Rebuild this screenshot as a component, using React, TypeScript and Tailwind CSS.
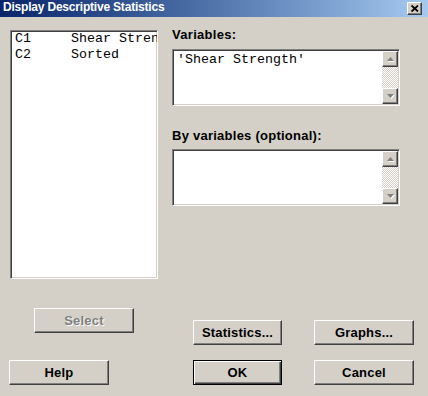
const ui = "font-['Liberation_Sans',Arial,sans-serif]";
const mono = "font-['Liberation_Mono','Courier_New',monospace]";

const raised =
  "border border-t-white border-l-white border-r-[#404040] border-b-[#404040] shadow-[inset_-1px_-1px_0_#808080]";
const sunken =
  "border border-t-[#808080] border-l-[#808080] border-r-white border-b-white shadow-[inset_1px_1px_0_#404040,inset_-1px_-1px_0_#d4d0c8]";

const Arrow = ({ down }: { down?: boolean }) => (
    <svg width="9" height="6" viewBox="0 0 9 6">
        <polygon points={down ? "1,1 8,1 4.5,5" : "1,5 8,5 4.5,1"} fill="#fff" transform="translate(1,1)" />
        <polygon points={down ? "1,1 8,1 4.5,5" : "1,5 8,5 4.5,1"} fill="#808080" />
    </svg>
);

const ScrollBtn = ({ down }: { down?: boolean }) => (
    <div className={`h-4 w-4 bg-[#d4d0c8] flex items-center justify-center ${raised}`}>
        <Arrow down={down} />
    </div>
);

const VarBox = ({ text }: { text?: string }) => (
    <div className={`w-[228px] h-[57px] bg-white flex ${sunken} p-[1px]`}>
        <div className={`flex-1 pl-[3px] pt-[1px] text-[13.33px] leading-[15px] text-black whitespace-pre ${mono}`}>
            {text}
        </div>
        <div className="w-4 flex flex-col">
            <ScrollBtn />
            <div className="flex-1 bg-[repeating-conic-gradient(#ffffff_0_25%,#d4d0c8_0_50%)] bg-[length:2px_2px]" />
            <ScrollBtn down />
        </div>
    </div>
);

const Btn = ({ label, w, disabled, def }: { label: string; w: string; disabled?: boolean; def?: boolean }) => (
    <div
        className={`${w} h-[25px] bg-[#d4d0c8] flex items-center justify-center text-[13px] font-bold tracking-[0.2px] ${ui} ${
            def
                ? "border border-black shadow-[inset_1px_1px_0_#fff,inset_-1px_-1px_0_#404040,inset_-2px_-2px_0_#808080]"
                : raised
        } ${disabled ? "text-[#808080] [text-shadow:1px_1px_0_#fff]" : "text-black"}`}
    >
        {label}
    </div>
);

export default function App() {
    return (
        <div className={`w-[428px] h-[396px] bg-[#d4d0c8] flex flex-col overflow-hidden ${ui}`}>
            <div className="h-[17px] shrink-0 bg-gradient-to-r from-[#0a246a] to-[#a6caf0] flex items-start pl-[3px] pr-[6px]">
                <span className="text-white text-[12px] font-bold leading-[14px] tracking-[-0.2px]">
                    Display Descriptive Statistics
                </span>
                <div className={`ml-auto mt-[2px] w-[15px] h-[13px] bg-[#d4d0c8] flex items-center justify-center ${raised}`}>
                    <svg width="8" height="7" viewBox="0 0 8 7">
                        <path d="M0.5 0.5 L7 6.5 M7 0.5 L0.5 6.5" stroke="#000" strokeWidth="1.8" />
                    </svg>
                </div>
            </div>

            <div className="flex items-start">
                <div className={`ml-[10px] mt-[13px] w-[148px] h-[249px] bg-white overflow-hidden ${sunken} p-[2px]`}>
                    <div className={`-mt-[2px] pl-[2px] text-[13.33px] leading-[15.5px] text-black whitespace-pre ${mono}`}>
                        <div>{"C1     Shear Stren"}</div>
                        <div>{"C2     Sorted"}</div>
                    </div>
                </div>

                <div className="ml-[14px] mt-[10px] flex flex-col">
                    <div className="text-[13px] font-bold leading-[16px] tracking-[0.3px] text-black">Variables:</div>
                    <div className="mt-[6px]">
                        <VarBox text="'Shear Strength'" />
                    </div>
                    <div className="mt-[22px] text-[13px] font-bold leading-[16px] tracking-[0.25px] text-black">
                        By variables (optional):
                    </div>
                    <div className="mt-[5px]">
                        <VarBox />
                    </div>
                </div>
            </div>

            <div className="flex items-start">
                <div className="ml-[34px] mt-[29px]">
                    <Btn label="Select" w="w-[100px]" disabled />
                </div>
                <div className="ml-[59px] mt-[41px] flex">
                    <Btn label="Statistics..." w="w-[89px]" />
                    <div className="ml-[32px]">
                        <Btn label="Graphs..." w="w-[100px]" />
                    </div>
                </div>
            </div>

            <div className="flex items-center mt-[15px]">
                <div className="ml-[9px]">
                    <Btn label="Help" w="w-[100px]" />
                </div>
                <div className="ml-[84px]">
                    <Btn label="OK" w="w-[89px]" def />
                </div>
                <div className="ml-[32px]">
                    <Btn label="Cancel" w="w-[100px]" />
                </div>
            </div>
        </div>
    );
}
